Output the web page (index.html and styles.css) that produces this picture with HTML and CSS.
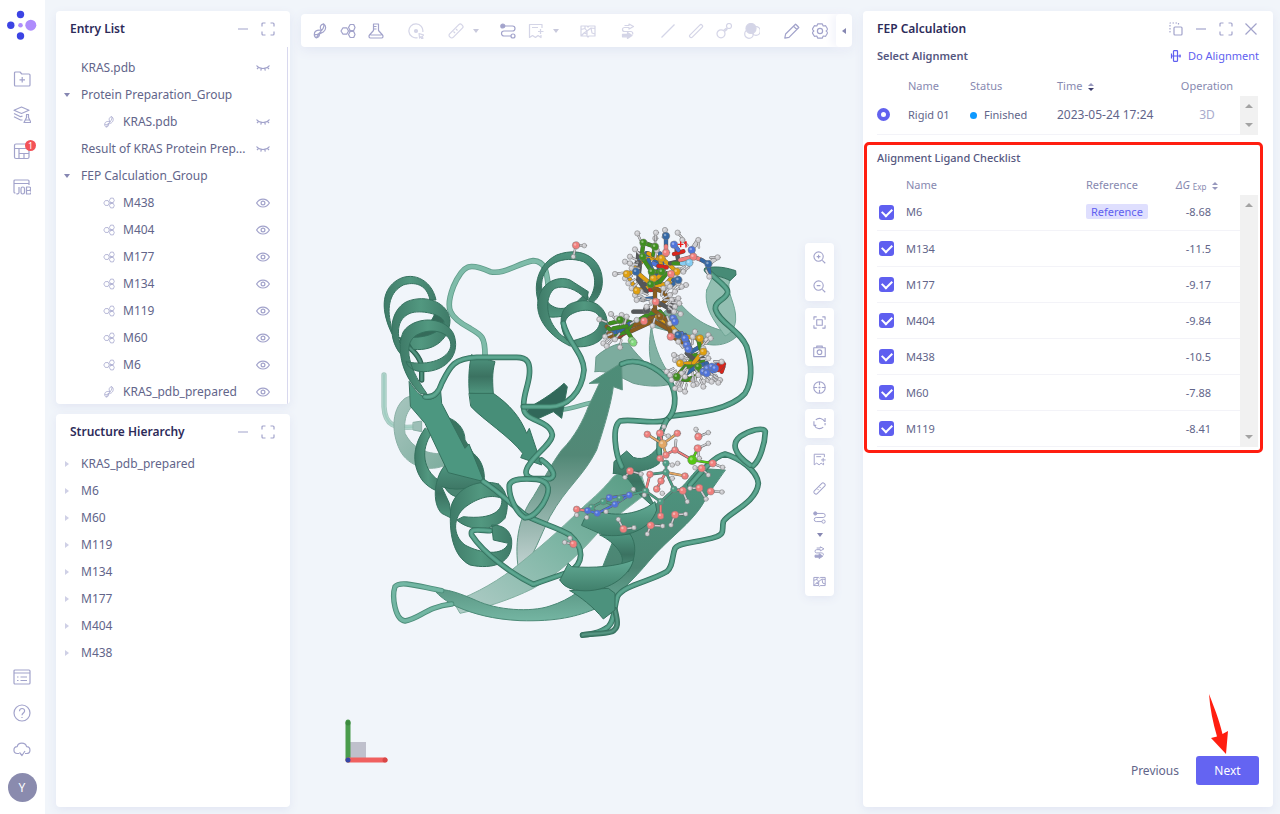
FILE: index.html
```html
<!DOCTYPE html>
<html lang="en">
<head>
<meta charset="utf-8">
<title>FEP Calculation</title>
<link rel="stylesheet" href="styles.css">
</head>
<body>
<svg class="defs" aria-hidden="true">
  <symbol id="i-folder" viewBox="0 0 18 18"><path d="M1.5 15V3a1 1 0 0 1 1-1H7l1.800 2H16a1 1 0 0 1 1 1v10a1 1 0 0 1-1 1H2.500a1 1 0 0 1-1-1zM9.200 7v5.500M6.500 9.800h5.500"/></symbol>
  <symbol id="i-layers" viewBox="0 0 18 18"><path d="M1 4.200 8.500 1 16 4.200 8.500 7.500zM1 7.500l6.500 3.200 2-.5M1 10.800l6.500 3.200h2M13 8.500h3M13.500 8.500v3L11 16.500h7l-2.500-5v-3M12.500 14h4.500"/></symbol>
  <symbol id="i-board" viewBox="0 0 18 18"><rect x="1.500" y="2" width="14.500" height="14.500" rx="1.500"/><path d="M1.500 6.500H16M6 6.500v10M6 11.500h10M11 11.500v5"/></symbol>
  <symbol id="i-job" viewBox="0 0 18 18"><path d="M2.500 15H2a1 1 0 0 1-1-1V3a1 1 0 0 1 1-1h13a1 1 0 0 1 1 1v4M1 5.500h15"/><path d="M6 9v5.500a1.500 1.500 0 0 1-2.500 1M13.500 9h2.500a1.600 1.600 0 0 1 0 3.500h-2.500zM13.500 12.500H16.500a1.700 1.700 0 0 1 0 3.500h-3z"/><rect x="8" y="9" width="3.500" height="7" rx="1.700"/></symbol>
  <symbol id="i-news" viewBox="0 0 18 18"><rect x="1" y="2" width="16" height="14" rx="1"/><path d="M1 5h16M4 9h1.500M7.500 9H14M4 12.500h1.500M7.500 12.500H14"/></symbol>
  <symbol id="i-help" viewBox="0 0 18 18"><circle cx="9" cy="9" r="8"/><path d="M6.500 7.200C6.500 3.500 11.700 3.800 11.600 7 11.500 9 9 9 9 11.300M9 13v1"/></symbol>
  <symbol id="i-cloud" viewBox="0 0 18 18"><path d="M6 13.500H4.500a3.400 3.400 0 0 1-.3-6.800C5 2 12.500 2 13.600 6.700c4.500.3 4.500 6.800-.2 6.800H12M6.500 12.500 9 15.500l3-4.500"/></symbol>
  <symbol id="i-full" viewBox="0 0 14 14"><path d="M1 4.500V2a1 1 0 0 1 1-1h2.500M9.500 1H12a1 1 0 0 1 1 1v2.500M13 9.500V12a1 1 0 0 1-1 1H9.500M4.500 13H2a1 1 0 0 1-1-1V9.500"/></symbol>
  <symbol id="i-min" viewBox="0 0 14 14"><path d="M2 7h10"/></symbol>
  <symbol id="i-x" viewBox="0 0 14 14"><path d="M1.500 1.500l11 11M12.500 1.500l-11 11"/></symbol>
  <symbol id="i-copy" viewBox="0 0 14 14"><rect x="5" y="5" width="8" height="8" rx="1"/><path stroke-dasharray="1.500 1.500" d="M9.500 2.500V1H1v9h2"/></symbol>
  <symbol id="i-closed" viewBox="0 0 14 14"><path d="M.5 4.500c3 4 10 4 13 0M2.500 6.300 1 8M5.300 7.500 4.800 9.700M8.800 7.500l.5 2.200M11.500 6.300 13 8"/></symbol>
  <symbol id="i-eye" viewBox="0 0 14 14"><path d="M.6 7c3-5.300 9.800-5.300 12.800 0-3 5.300-9.800 5.300-12.800 0z"/><circle cx="7" cy="7" r="1.900"/></symbol>
  <symbol id="i-helix" viewBox="0 0 16 16"><path d="M9.500 7.500C7 4.500 8.500 1.500 11.500.8c1 2.200.3 4.200-2 6.700zM11.500.8c3 2 2.800 6-.2 8.200C8 10.500 5.500 11 4.500 14.800M9.500 7.500C5 6.500 2 8.200 2.300 11.500c2.500.8 4.700-.5 7.200-4zM2.300 11.500c0 2 1 3 2.200 3.300 3-.5 3.500-3 2.500-5"/></symbol>
  <symbol id="i-mol" viewBox="0 0 16 16"><path d="M1 8l2-3.200h3.700L8.500 8l-1.800 3.200H3zM8.500 8h4M8.500 4.500l1.700-3h3.500l1.300 3-1.300 3h-3.500zM8.500 11.500l1.700-3h3.500l1.300 3-1.300 3h-3.500z"/></symbol>
  <symbol id="i-flask" viewBox="0 0 16 16"><path d="M5.500 1h5v6.500l4 4.500c1 1.200.5 3-1 3h-11c-1.500 0-2-1.800-1-3l4-4.500zM5.500 3.500h3M5.500 6h3M2.500 12h11"/></symbol>
  <symbol id="i-target" viewBox="0 0 16 16"><path d="M14.800 9A7 7 0 1 0 9.500 14.700"/><circle class="solid" cx="8" cy="8" r="1.500"/><path d="M11 10.500l5 1.700-2 1 1 2-1.200.5-1-2-1.200 1.300z"/></symbol>
  <symbol id="i-ruler" viewBox="0 0 16 16"><rect x="-.5" y="5.500" width="17" height="5" rx="2" transform="rotate(-45 8 8)"/><path d="M5.500 8.500l1.500 1.500M8 6l1.500 1.500"/></symbol>
  <symbol id="i-path" viewBox="0 0 16 16"><path d="M4 3h8.500a2.500 2.500 0 0 1 0 5H4a2.500 2.500 0 0 0 0 5h7"/><circle class="solid" cx="2.800" cy="3" r="2"/><circle cx="13" cy="13" r="2"/></symbol>
  <symbol id="i-mark" viewBox="0 0 16 16"><path d="M14 5V1.500H1.500v13l3-2 3 2 2.500-2 3 2V12M4 4.500h6M12.500 6v5M10 8.500h5.500"/></symbol>
  <symbol id="i-map" viewBox="0 0 16 16"><path d="M1 3h6l1 1 1-1h6v10H9l-1 1-1-1H1zM1 6.500l4-1 2 2.500-3 2-3 3M5 5.500V3M7 8l4-3 4 .5M11 5l1 5 3 1M7 8v5M4 10l3 1"/></symbol>
  <symbol id="i-route" viewBox="0 0 16 16"><path d="M4.500 2.500H9V1l4.500 2.500L9 6V4.500H4.500a2 2 0 0 0 0 4h6.500a2 2 0 0 1 1.500 3"/><path class="solid" d="M2.500 11.300h5V9.500l4.500 3-4.500 3v-1.700h-5z"/></symbol>
  <symbol id="i-line" viewBox="0 0 16 16"><path d="M1.500 14.500l13-13"/></symbol>
  <symbol id="i-stick" viewBox="0 0 16 16"><rect x="-.5" y="6.500" width="17" height="3.200" rx="1.600" transform="rotate(-45 8 8)"/></symbol>
  <symbol id="i-bond" viewBox="0 0 16 16"><circle cx="5" cy="10.800" r="4"/><circle cx="13" cy="3" r="2.500"/><path d="M7.500 7.500l2.500-2 1 1-2.500 2"/></symbol>
  <symbol id="i-balls" viewBox="0 0 16 16"><circle cx="5" cy="11" r="4.300"/><circle cx="12" cy="8" r="4.300"/><circle class="solid" cx="7" cy="5.500" r="5"/></symbol>
  <symbol id="i-pen" viewBox="0 0 16 16"><path d="M.8 15.200l.8-4.200L11.500 1.200l3.300 3.300L5 14.400zM9.500 3.200 12.800 6.500M12 1.500l2.500 2.500"/></symbol>
  <symbol id="i-gear" viewBox="0 0 16 16"><path d="M5.800.8h4.400l1 2.200 2.400-.3 2.100 3.600L14.200 8l1.500 1.700-2.100 3.600-2.400-.3-1 2.200H5.800L4.800 13l-2.400.3L.3 9.700 1.800 8 .3 6.300l2.100-3.600 2.400.3z"/><circle cx="8" cy="8" r="2.600"/></symbol>
  <symbol id="i-in" viewBox="0 0 14 14"><circle cx="6" cy="6" r="5"/><path d="M10 10l3.200 3.200M6 4v4M4 6h4"/></symbol>
  <symbol id="i-out" viewBox="0 0 14 14"><circle cx="6" cy="6" r="5"/><path d="M10 10l3.200 3.200M4 6h4"/></symbol>
  <symbol id="i-fit" viewBox="0 0 14 14"><path d="M1 4V1h3M10 1h3v3M13 10v3h-3M4 13H1v-3"/><rect x="4" y="4" width="6" height="6"/></symbol>
  <symbol id="i-cam" viewBox="0 0 14 14"><path d="M.8 3h12.400v9.500H.800zM4 3V1.200h6V3"/><circle cx="7" cy="7.700" r="2.500"/></symbol>
  <symbol id="i-cross" viewBox="0 0 14 14"><circle cx="7" cy="7" r="6.200"/><path d="M7 1v3.500M7 9.500V13M1 7h3.500M9.500 7H13"/><circle class="solid" cx="7" cy="7" r=".6"/></symbol>
  <symbol id="i-sync" viewBox="0 0 14 14"><path d="M3 3.200A5.800 5.800 0 0 1 12.500 5M13 1v4.500M1 4.500V9.500M11 10.800A5.800 5.800 0 0 1 1.500 9M13 9V6.500M1 9h2.500"/></symbol>
  <symbol id="i-align" viewBox="0 0 12 12"><rect x="3.500" y=".7" width="4" height="10.600" rx=".5"/><path d="M1.500 3.500v5M1.500 6H11M10 4.500v3"/></symbol>
</svg>

<nav class="rail">
  <svg class="logo" viewBox="0 0 30 30" role="img" aria-label="Home"><circle cx="13.500" cy="4.500" r="3.700" fill="#3c44e4"/><circle cx="3.800" cy="15.200" r="3.700" fill="#3c44e4"/><circle cx="13.500" cy="26" r="3.700" fill="#3c44e4"/><circle cx="13.500" cy="15.200" r="2.300" fill="#ae8cfc"/><circle cx="23.800" cy="15.200" r="5.500" fill="#ae8cfc"/></svg>
  <button class="rail-btn" aria-label="New project"><svg><use href="#i-folder"/></svg></button>
  <button class="rail-btn" aria-label="Library"><svg><use href="#i-layers"/></svg></button>
  <button class="rail-btn" aria-label="Results"><svg><use href="#i-board"/></svg><span class="badge">1</span></button>
  <button class="rail-btn" aria-label="Jobs"><svg><use href="#i-job"/></svg></button>
  <span class="grow"></span>
  <button class="rail-btn" aria-label="News"><svg><use href="#i-news"/></svg></button>
  <button class="rail-btn" aria-label="Help"><svg><use href="#i-help"/></svg></button>
  <button class="rail-btn" aria-label="Cloud"><svg><use href="#i-cloud"/></svg></button>
  <button class="avatar">Y</button>
</nav>

<main class="workspace">
  <div class="side">
    <section class="panel entries">
      <header class="panel-head"><h2>Entry List</h2><button class="ico" aria-label="Minimize"><svg><use href="#i-min"/></svg></button><button class="ico" aria-label="Full screen"><svg><use href="#i-full"/></svg></button></header>
      <ul class="tree scrolled">
        <li class="row"><span class="fold"></span><span class="label">KRAS.pdb</span><button class="ico" aria-label="Show"><svg><use href="#i-closed"/></svg></button></li>
        <li class="row"><span class="fold open"></span><span class="label">Protein Preparation_Group</span></li>
        <li class="row child"><svg class="kind"><use href="#i-helix"/></svg><span class="label">KRAS.pdb</span><button class="ico" aria-label="Show"><svg><use href="#i-closed"/></svg></button></li>
        <li class="row"><span class="fold"></span><span class="label">Result of KRAS Protein Prep...</span><button class="ico" aria-label="Show"><svg><use href="#i-closed"/></svg></button></li>
        <li class="row"><span class="fold open"></span><span class="label">FEP Calculation_Group</span></li>
        <li class="row child"><svg class="kind"><use href="#i-mol"/></svg><span class="label">M438</span><button class="ico" aria-label="Hide"><svg><use href="#i-eye"/></svg></button></li>
        <li class="row child"><svg class="kind"><use href="#i-mol"/></svg><span class="label">M404</span><button class="ico" aria-label="Hide"><svg><use href="#i-eye"/></svg></button></li>
        <li class="row child"><svg class="kind"><use href="#i-mol"/></svg><span class="label">M177</span><button class="ico" aria-label="Hide"><svg><use href="#i-eye"/></svg></button></li>
        <li class="row child"><svg class="kind"><use href="#i-mol"/></svg><span class="label">M134</span><button class="ico" aria-label="Hide"><svg><use href="#i-eye"/></svg></button></li>
        <li class="row child"><svg class="kind"><use href="#i-mol"/></svg><span class="label">M119</span><button class="ico" aria-label="Hide"><svg><use href="#i-eye"/></svg></button></li>
        <li class="row child"><svg class="kind"><use href="#i-mol"/></svg><span class="label">M60</span><button class="ico" aria-label="Hide"><svg><use href="#i-eye"/></svg></button></li>
        <li class="row child"><svg class="kind"><use href="#i-mol"/></svg><span class="label">M6</span><button class="ico" aria-label="Hide"><svg><use href="#i-eye"/></svg></button></li>
        <li class="row child"><svg class="kind"><use href="#i-helix"/></svg><span class="label">KRAS_pdb_prepared</span><button class="ico" aria-label="Hide"><svg><use href="#i-eye"/></svg></button></li>
      </ul>
    </section>
    <section class="panel structure">
      <header class="panel-head"><h2>Structure Hierarchy</h2><button class="ico" aria-label="Minimize"><svg><use href="#i-min"/></svg></button><button class="ico" aria-label="Full screen"><svg><use href="#i-full"/></svg></button></header>
      <ul class="tree">
        <li class="row"><span class="fold shut"></span><span class="label">KRAS_pdb_prepared</span></li>
        <li class="row"><span class="fold shut"></span><span class="label">M6</span></li>
        <li class="row"><span class="fold shut"></span><span class="label">M60</span></li>
        <li class="row"><span class="fold shut"></span><span class="label">M119</span></li>
        <li class="row"><span class="fold shut"></span><span class="label">M134</span></li>
        <li class="row"><span class="fold shut"></span><span class="label">M177</span></li>
        <li class="row"><span class="fold shut"></span><span class="label">M404</span></li>
        <li class="row"><span class="fold shut"></span><span class="label">M438</span></li>
      </ul>
    </section>
  </div>

  <div class="viewer">
    <div class="toolbar" role="toolbar" aria-label="Viewer tools">
      <div class="tools"><button class="tool" aria-label="Protein"><svg><use href="#i-helix"/></svg></button><button class="tool" aria-label="Ligand"><svg><use href="#i-mol"/></svg></button><button class="tool" aria-label="Prepare"><svg><use href="#i-flask"/></svg></button></div>
      <div class="tools"><button class="tool dim" aria-label="Select"><svg><use href="#i-target"/></svg></button></div>
      <div class="tools"><button class="tool dim" aria-label="Measure"><svg><use href="#i-ruler"/></svg></button><button class="drop dim" aria-label="Measure options"></button></div>
      <div class="tools"><button class="tool" aria-label="Interactions"><svg><use href="#i-path"/></svg></button><button class="tool dim" aria-label="Label"><svg><use href="#i-mark"/></svg></button><button class="drop dim" aria-label="Label options"></button></div>
      <div class="tools"><button class="tool dim" aria-label="Surface"><svg><use href="#i-map"/></svg></button></div>
      <div class="tools"><button class="tool dim" aria-label="Cartoon"><svg><use href="#i-route"/></svg></button></div>
      <div class="tools"><button class="tool dim" aria-label="Line"><svg><use href="#i-line"/></svg></button><button class="tool dim" aria-label="Stick"><svg><use href="#i-stick"/></svg></button><button class="tool dim" aria-label="Ball and stick"><svg><use href="#i-bond"/></svg></button><button class="tool dim" aria-label="Spheres"><svg><use href="#i-balls"/></svg></button></div>
      <div class="tools"><button class="tool" aria-label="Edit"><svg><use href="#i-pen"/></svg></button><button class="tool" aria-label="Settings"><svg><use href="#i-gear"/></svg></button></div>
      <button class="more" aria-label="Collapse"></button>
    </div>
    <div class="stage">
      <svg class="scene" viewBox="301 47 551 760" role="img" aria-label="KRAS protein with aligned ligands">
        <defs>
          <linearGradient id="g-light" x1="0" y1="0" x2="0" y2="1"><stop offset="0" stop-color="#62ab95"/><stop offset="1" stop-color="#41806c"/></linearGradient>
          <linearGradient id="g-deep" x1="0" y1="0" x2="0" y2="1"><stop offset="0" stop-color="#4f9680"/><stop offset=".55" stop-color="#3b7261"/><stop offset="1" stop-color="#4f967f"/></linearGradient>
          <linearGradient id="g-turn" x1="0" y1="0" x2="1" y2="0"><stop offset="0" stop-color="#3f7b68"/><stop offset=".5" stop-color="#529880"/><stop offset="1" stop-color="#3f7b68"/></linearGradient>
          <linearGradient id="g-fall" x1="0" y1="0" x2="0" y2="1"><stop offset="0" stop-color="#4d8d78"/><stop offset=".45" stop-color="#528876"/><stop offset="1" stop-color="#c3d3d2"/></linearGradient>
          <linearGradient id="g-slope" x1="1" y1="0" x2="0" y2="1"><stop offset="0" stop-color="#52987f"/><stop offset=".5" stop-color="#7db5a4"/><stop offset="1" stop-color="#b2cdc8"/></linearGradient>
          <linearGradient id="g-floor" x1="0" y1="0" x2="0" y2="1"><stop offset="0" stop-color="#4d9680"/><stop offset=".65" stop-color="#4c8573"/><stop offset="1" stop-color="#74b5a2"/></linearGradient>
          <linearGradient id="g-mist" x1="0" y1="0" x2="1" y2="1"><stop offset="0" stop-color="#a8c6bf"/><stop offset="1" stop-color="#7cac9d"/></linearGradient>
        </defs>
        <g id="molecule" transform="translate(370 220) scale(.333333)"></g>
        <g class="axes">
          <rect x="348" y="742" width="18" height="18" fill="#bfc0cc"/>
          <path d="M348 722v38" stroke="#4a9c4c" stroke-width="5"/><circle cx="348" cy="723" r="2.500" fill="#3c8b3e"/>
          <path d="M348 760h37" stroke="#f0605f" stroke-width="5"/><circle cx="385" cy="760" r="2.500" fill="#d84646"/>
          <circle cx="348" cy="760" r="2.500" fill="#3545a8"/>
        </g>
      </svg>
      <div class="dock">
        <div class="dock-group"><button class="dock-btn" aria-label="Zoom in"><svg><use href="#i-in"/></svg></button><button class="dock-btn" aria-label="Zoom out"><svg><use href="#i-out"/></svg></button></div>
        <div class="dock-group"><button class="dock-btn" aria-label="Fit"><svg><use href="#i-fit"/></svg></button><button class="dock-btn" aria-label="Snapshot"><svg><use href="#i-cam"/></svg></button></div>
        <div class="dock-group"><button class="dock-btn" aria-label="Center"><svg><use href="#i-cross"/></svg></button></div>
        <div class="dock-group"><button class="dock-btn" aria-label="Reset"><svg><use href="#i-sync"/></svg></button></div>
        <div class="dock-group"><button class="dock-btn" aria-label="Label"><svg><use href="#i-mark"/></svg></button><button class="dock-btn" aria-label="Measure"><svg><use href="#i-ruler"/></svg></button><button class="dock-btn" aria-label="Interactions"><svg><use href="#i-path"/></svg></button><button class="dock-drop" aria-label="Interaction options"></button><button class="dock-btn" aria-label="Cartoon"><svg><use href="#i-route"/></svg></button><button class="dock-btn" aria-label="Surface"><svg><use href="#i-map"/></svg></button></div>
      </div>
    </div>
  </div>

  <section class="panel fep">
    <header class="panel-head"><h2>FEP Calculation</h2><button class="ico" aria-label="Pop out"><svg><use href="#i-copy"/></svg></button><button class="ico" aria-label="Minimize"><svg><use href="#i-min"/></svg></button><button class="ico" aria-label="Full screen"><svg><use href="#i-full"/></svg></button><button class="ico" aria-label="Close"><svg><use href="#i-x"/></svg></button></header>
    <div class="fep-sub"><h3>Select Alignment</h3><a class="do" href="#align"><svg><use href="#i-align"/></svg>Do Alignment</a></div>
    <div class="grid">
      <table class="runs">
        <thead><tr><th class="c-pick"></th><th class="c-run">Name</th><th class="c-status">Status</th><th>Time<i class="sort desc"></i></th><th class="c-op">Operation</th></tr></thead>
        <tbody><tr><td><input type="radio" class="pick" name="run" aria-label="Rigid 01" checked></td><td>Rigid 01</td><td><span class="done">Finished</span></td><td class="time">2023-05-24 17:24</td><td class="c-op"><button class="view3d">3D</button></td></tr></tbody>
      </table>
      <div class="track" aria-hidden="true"></div>
    </div>
    <section class="checklist">
      <h3>Alignment Ligand Checklist</h3>
      <div class="grid">
        <table class="ligands">
          <thead><tr><th class="c-check"></th><th>Name</th><th class="c-ref">Reference</th><th class="c-dg"><em>ΔG</em> <small>Exp</small><i class="sort"></i></th></tr></thead>
          <tbody>
            <tr><td><input type="checkbox" aria-label="M6" checked></td><td>M6</td><td><span class="tag">Reference</span></td><td class="num">-8.68</td></tr>
            <tr><td><input type="checkbox" aria-label="M134" checked></td><td>M134</td><td></td><td class="num">-11.5</td></tr>
            <tr><td><input type="checkbox" aria-label="M177" checked></td><td>M177</td><td></td><td class="num">-9.17</td></tr>
            <tr><td><input type="checkbox" aria-label="M404" checked></td><td>M404</td><td></td><td class="num">-9.84</td></tr>
            <tr><td><input type="checkbox" aria-label="M438" checked></td><td>M438</td><td></td><td class="num">-10.5</td></tr>
            <tr><td><input type="checkbox" aria-label="M60" checked></td><td>M60</td><td></td><td class="num">-7.88</td></tr>
            <tr><td><input type="checkbox" aria-label="M119" checked></td><td>M119</td><td></td><td class="num">-8.41</td></tr>
          </tbody>
        </table>
        <div class="track tall" aria-hidden="true"></div>
      </div>
    </section>
    <span class="grow"></span>
    <footer class="actions">
      <button class="prev">Previous</button>
      <button class="next">Next</button>
      <svg class="pointer" viewBox="0 0 24 64" aria-hidden="true"><path d="M3 1C8 14 13 26 16.500 41L22 38 20 61 5 45l6-1.500C7 30 4 16 3 1z" fill="#ff1e10"/></svg>
    </footer>
  </section>
</main>
<script src="scene.js"></script>
</body>
</html>
```
FILE: styles.css
```css
* { box-sizing: border-box; }
body { margin: 0; min-height: 100vh; display: flex; background: #f1f5fa; color: #62658a; font: 12px/18px "Noto Sans", "Open Sans", sans-serif; }
button { border: 0; padding: 0; background: none; color: inherit; font: inherit; display: inline-flex; align-items: center; justify-content: center; cursor: pointer; }
h2, h3 { margin: 0; }
ul { margin: 0; padding: 0; list-style: none; }
svg { fill: none; stroke: #a2a3cb; stroke-linejoin: round; stroke-width: 1.2; flex: none; }
.solid { fill: #a2a3cb; }
.defs { position: absolute; width: 0; height: 0; }
.grow { flex: 1; }

.rail { width: 45px; background: #fff; display: flex; flex-direction: column; align-items: center; padding: 10px 1px 12px 0; flex: none; }
.logo { width: 30px; height: 30px; stroke: none; margin-bottom: 21px; }
.rail-btn { width: 36px; height: 36px; position: relative; }
.rail-btn svg { width: 18px; height: 18px; }
.badge { position: absolute; top: 7px; right: 4px; width: 11px; height: 11px; border-radius: 50%; background: #f35258; color: #fff; font-size: 9px; line-height: 11px; }
.avatar { width: 29px; height: 29px; border-radius: 50%; background: #8a8bae; color: #fff; margin-top: 6px; }

.workspace { flex: 1; min-width: 0; display: flex; gap: 11px; padding: 11px 7px 7px 11px; }
.panel { background: #fff; border-radius: 4px; box-shadow: 0 3px 10px #e2e6f3; }
.panel-head { height: 36px; display: flex; align-items: center; gap: 11px; padding: 0 15px 0 14px; }
.panel-head h2 { flex: 1; font-size: 12px; font-weight: 600; color: #2d2b5a; }
.ico { width: 14px; height: 14px; }
.ico svg { width: 14px; height: 14px; }

.side { width: 234px; flex: none; display: flex; flex-direction: column; gap: 10px; }
.side .panel { flex: 1 0 0; min-height: 0; overflow: hidden; }
.tree.scrolled { padding-top: 7px; border-right: 1px solid #d8d8ee; margin-right: 2px; }
.row { height: 27px; display: flex; align-items: center; padding: 0 20px 0 4px; }
.scrolled .row { padding-right: 17px; }
.label { flex: 1; white-space: nowrap; }
.fold { width: 14px; margin-right: 7px; display: flex; justify-content: center; }
.open::before, .drop::before, .dock-drop::before { content: ""; border: 3px solid transparent; border-top: 4px solid #8687b2; border-bottom: 0; }
.shut::before { content: ""; border: 3px solid transparent; border-left: 4px solid #cfd0e6; border-right: 0; }
.child { padding-left: 47px; }
.kind { width: 12px; height: 12px; margin-right: 8px; stroke-width: 1; }

.viewer { flex: 1; min-width: 0; display: flex; flex-direction: column; padding-top: 3px; }
.toolbar { height: 33px; background: #fff; border-radius: 4px; display: flex; align-items: stretch; padding-left: 5px; box-shadow: 0 3px 12px #e2e6f3; }
.tools { display: flex; }
.tools + .tools { margin-left: 12px; }
.tool { width: 28px; }
.tool svg { width: 16px; height: 16px; }
.dim { opacity: .45; }
.drop { width: 12px; }
.more { width: 16px; margin-left: auto; border-radius: 4px; box-shadow: -4px 0 8px #f3f4fb; }
.more::before { content: ""; border: 3px solid transparent; border-right: 4px solid #8687b2; border-left: 0; }
.stage { flex: 1; position: relative; }
.scene { position: absolute; width: 100%; height: 100%; stroke: none; stroke-linecap: round; }
.dock { position: absolute; top: 196px; right: 18px; width: 29px; display: flex; flex-direction: column; gap: 7px; }
.dock-group { background: #fff; border-radius: 4px; display: flex; flex-direction: column; box-shadow: 0 2px 10px #e2e6f3; }
.dock-btn { height: 29px; }
.dock-btn svg { width: 13px; height: 13px; }
.dock-drop { height: 6px; }

.fep { width: 410px; flex: none; display: flex; flex-direction: column; padding: 0 14px 22px; }
.fep .panel-head { padding: 0 1px 0 0; }
h3 { font-size: 11px; font-weight: 600; color: #55577f; }
.fep-sub { display: flex; justify-content: space-between; align-items: center; height: 18px; }
.do { color: #5f5ff0; text-decoration: none; font-size: 11px; display: flex; align-items: center; gap: 6px; }
.do svg { width: 12px; height: 12px; stroke: #5f5ff0; }
.grid { display: flex; align-items: flex-end; }
table { flex: 1; border-collapse: collapse; table-layout: fixed; font-size: 11px; line-height: 16px; }
th, td { padding: 0; text-align: left; font-weight: 400; }
th { color: #8789b0; }
td { border-bottom: 1px solid #f3f3f8; }
input { appearance: none; margin: 0; display: block; }
.runs th { height: 31px; padding-top: 11px; }
.runs td { height: 38px; }
.c-pick { width: 31px; }
.c-run { width: 62px; }
.c-status { width: 87px; }
.c-op { width: 66px; text-align: center; }
.pick { width: 13px; height: 13px; border: 4px solid #6262ee; border-radius: 50%; background: #fff; }
.done::before { content: ""; display: inline-block; width: 7px; height: 7px; border-radius: 50%; background: #0d99ff; margin-right: 7px; }
.time { font-size: 12px; }
.view3d { font-size: 12px; color: #a9abcd; }
.sort { display: inline-flex; flex-direction: column; gap: 2px; margin-left: 6px; vertical-align: middle; }
.sort::before, .sort::after { content: ""; border: 3px solid transparent; }
.sort::before { border-top: 0; border-bottom: 3px solid #9798bd; }
.sort::after { border-bottom: 0; border-top: 3px solid #9798bd; }
.sort.desc::after { border-top-color: #3e3e6e; }
.track { width: 18px; height: 39px; background: #f1f1f1; display: flex; flex-direction: column; justify-content: space-between; align-items: center; padding: 8px 0; margin-right: 1px; }
.track::before, .track::after { content: ""; border: 4px solid transparent; }
.track::before { border-top: 0; border-bottom: 4px solid #a3a3a3; }
.track::after { border-bottom: 0; border-top: 4px solid #a3a3a3; }
.track.tall { height: 252px; }

.checklist { margin: 7px -4px 0 -13px; border: 3px solid #ff1e10; border-radius: 5px; padding: 0 1px 3px 10px; }
.checklist h3 { line-height: 26px; font-weight: 500; }
.ligands th { height: 24px; padding-top: 4px; }
.ligands td { height: 36px; }
.c-check { width: 29px; }
.c-ref { width: 90px; }
.c-dg { width: 64px; }
.c-dg small { font-size: 8px; line-height: 8px; vertical-align: -1px; }
.ligands .num { text-align: right; padding-right: 29px; }
.tag { display: inline-block; background: #dfdffe; color: #5f5ff0; border-radius: 2px; padding: 0 5px; line-height: 15px; }
.ligands input { width: 15px; height: 15px; margin-left: 2px; border-radius: 3px; background: #5f5ff0; display: flex; align-items: center; justify-content: center; }
.ligands input::before { content: ""; width: 8px; height: 5px; border: 2px solid #fff; border-top: 0; border-right: 0; transform: rotate(-45deg); margin-bottom: 2px; }

.actions { display: flex; justify-content: flex-end; gap: 17px; position: relative; }
.next { width: 63px; height: 29px; border-radius: 3px; background: #6464f2; color: #fff; }
.pointer { position: absolute; width: 24px; height: 64px; right: 29px; bottom: 28px; stroke: none; }
```
FILE: scene.js
```js
const NS = 'http://www.w3.org/2000/svg';
const root = document.getElementById('molecule');

function add(tag, attrs) {
  const el = document.createElementNS(NS, tag);
  for (const key in attrs) el.setAttribute(key, attrs[key]);
  root.appendChild(el);
}

// tube: backbone coil; ribbon: helix turn or sheet
function tube(d, color = '#4f9a83', edge = '#35705e', width = 12) {
  add('path', { d, fill: 'none', stroke: edge, 'stroke-width': width + 5 });
  add('path', { d, fill: 'none', stroke: color, 'stroke-width': width });
  add('path', { d, fill: 'none', stroke: '#7cc0ab', 'stroke-width': width / 2, opacity: 0.35 });
}
function ribbon(d, fill = 'url(#g-light)', edge = '#34705d') {
  add('path', { d, fill, stroke: edge, 'stroke-width': 3 });
}

// far layer
tube('M42 465V560C45 615 70 628 145 620', '#b4d5cd', '#a3c6bd', 11);
ribbon('M235 600C225 540 160 505 105 535C60 570 65 650 95 700C125 745 190 760 240 728L225 700C180 705 130 690 105 640C100 600 110 560 150 545C185 540 200 570 205 600Z', 'url(#g-mist)', '#8bb0a6');
ribbon('M130 607L155 603V635L130 630Z', '#9dbfb7', '#8bb0a6');
tube('M345 405C345 350 335 345 300 325C235 290 225 265 250 200C280 130 300 128 360 155C405 165 440 130 490 122C525 125 530 150 535 200', '#80bba9', '#5f9c89', 12);
tube('M580 568C610 565 630 555 665 548', '#80bba9', '#5f9c89', 9);
ribbon('M930 250C980 310 1040 335 1110 340C1070 385 1010 385 960 350L845 320C850 370 870 420 890 450L850 450C830 400 840 350 845 310L900 260Z', '#82b2a4', '#6c9f90');
ribbon('M1010 210C1020 190 1025 175 1030 165L1080 180C1065 215 1100 250 1097 300C1095 330 1075 345 1065 348C1040 310 1000 270 1010 210Z', '#93bfb2', '#6fa696');
ribbon('M675 455L678 410C700 390 740 365 775 370C810 420 870 470 910 490C880 500 840 502 790 490C750 470 710 450 675 455Z', '#7cac9e', '#69998b');
ribbon('M1005 145C1040 135 1075 145 1097 152L1098 165L1080 182C1060 170 1030 165 1015 165Z', '#478b76');
ribbon('M658 490L755 428L757 510L730 500C725 540 710 600 680 690C640 770 590 800 540 890C510 950 490 1010 460 1045L445 1045C435 980 440 900 490 830C520 780 545 730 575 690C615 650 640 600 655 560L688 490Z', 'url(#g-fall)', '#5f9483');
ribbon('M800 720L730 770C690 820 660 840 630 870C570 930 500 990 450 1030C390 1080 320 1120 250 1145L270 1180C340 1165 420 1140 490 1105C570 1060 640 990 700 920L830 820Z', 'url(#g-slope)', '#7fae9f');
ribbon('M1065 750L985 745C960 770 945 795 930 805C880 830 850 860 800 900L730 960L690 1060C650 1100 600 1140 540 1158C480 1178 380 1170 320 1142C270 1120 230 1105 190 1108C210 1130 230 1145 260 1160C310 1182 370 1198 450 1202C560 1205 620 1190 680 1165C740 1130 790 1080 840 1020C900 950 980 900 1010 830Z', 'url(#g-floor)', '#4b8a76');
ribbon('M730 760L732 725L770 693L790 712C825 725 850 700 865 680L868 730C850 745 830 750 800 755L860 870L800 815C780 780 765 760 730 760Z', 'url(#g-deep)');

// upper left helix
ribbon('M85 352C120 362 170 340 195 280L225 290C220 340 170 370 120 385Z', '#356b5a');
tube('M95 365C130 390 150 410 155 440V480', '#3e7c69', '#28594a', 11);
ribbon('M65 340C32 270 35 215 75 185C120 150 185 175 198 240L180 240C170 190 130 185 100 195C60 215 50 260 62 310Z', 'url(#g-turn)');
ribbon('M90 400C50 350 60 270 110 245C170 220 235 250 240 300C240 350 200 395 130 388L105 350C170 360 222 330 222 305C215 282 150 268 120 280C85 295 76 330 95 390Z', 'url(#g-turn)');
ribbon('M150 520C90 460 80 380 100 335C130 290 220 285 250 340C275 400 230 455 160 455C130 455 112 440 108 425C180 440 235 415 242 380C248 340 190 318 140 345C104 365 105 430 170 520Z', 'url(#g-turn)');

// lower left helix
ribbon('M165 625C125 680 125 740 160 785C180 805 200 815 215 815L205 780C160 750 150 690 185 640Z', 'url(#g-turn)');
ribbon('M225 590C265 600 285 630 285 660L310 700C335 720 345 750 343 785L280 740L230 640Z', '#3a7461');
ribbon('M230 730C190 770 185 850 215 880L245 895L238 850L215 800C270 820 320 800 345 782L260 750Z', 'url(#g-deep)');
ribbon('M225 803C270 815 310 800 335 790L300 825C270 840 240 830 225 803Z', '#4a8572');
ribbon('M385 792C330 775 260 800 243 860C235 940 250 1010 300 1035C370 1050 430 1030 425 960C420 930 400 915 365 915L370 960L415 970C400 1010 330 1000 285 975C245 945 250 890 285 862C315 838 360 820 395 835C400 870 370 900 280 890L260 900C300 935 370 935 405 895C420 850 410 810 385 792Z', 'url(#g-turn)');
ribbon('M118 485C135 510 150 530 175 537C195 540 207 520 210 490L215 550L285 685L297 672L342 785L235 758L165 610L122 560Z', '#4c9780');

// centre sheet
ribbon('M305 405L375 425C365 460 368 490 370 522L298 520C295 480 296 440 305 405Z', 'url(#g-deep)');
ribbon('M298 520L370 520C420 555 450 590 470 640L478 625L515 735L452 713L458 700C420 650 340 600 303 560Z', '#478e78');
ribbon('M480 560C520 540 560 510 582 490L592 500L575 595L550 575L500 598L470 575Z', '#31685a');
tube('M340 785C380 810 410 840 465 885C510 910 560 920 600 945C645 985 640 1030 600 1055L490 1093C430 1065 340 1000 305 945C300 925 320 930 360 932');
tube('M515 720C550 745 560 770 540 776H490C460 770 465 750 480 730C500 700 545 670 547 645C540 600 470 605 462 570C455 535 475 500 478 465C482 425 470 412 440 412H320C250 415 240 440 215 490C205 520 190 535 165 530');
tube('M465 893C440 880 415 830 418 795C425 775 460 775 500 778C545 785 540 815 520 850C500 880 485 893 465 893');

// upper centre helix
ribbon('M530 290C480 230 490 140 560 105C640 75 700 120 697 190C695 220 680 240 665 250L655 240C680 210 685 150 640 125C580 105 520 130 515 190C512 230 540 270 580 265C600 262 620 250 650 215L655 235C620 290 560 295 530 290Z', 'url(#g-deep)');
ribbon('M600 378C540 350 500 300 503 250C508 190 560 165 600 180L655 215L650 240C620 205 580 195 555 205C525 225 525 290 560 330C570 345 590 360 615 365Z', 'url(#g-turn)');
ribbon('M590 360C565 320 565 260 610 248C660 230 710 255 712 310C712 360 670 385 610 380L600 365C650 350 690 340 690 300C690 270 640 260 600 285C580 300 580 320 600 355Z', 'url(#g-turn)');
tube('M580 310C595 370 640 400 642 450C635 520 590 560 540 560H460');

// right hand coils
tube('M1010 150C1040 180 1080 205 1072 220C1065 240 1030 245 1037 270C1050 310 1110 330 1130 380C1145 430 1150 480 1125 520C1080 570 980 580 905 588');
tube('M755 432C800 410 860 440 900 485C925 530 915 580 890 600C850 615 790 595 750 603C725 620 735 700 755 740');
tube('M890 600C870 640 865 660 868 700');
tube('M960 795C990 760 1030 710 1065 702C1110 715 1160 750 1165 790C1160 850 1070 880 1060 905C1055 930 1065 940 1040 950C980 970 930 965 915 985C905 1010 910 1040 890 1055C840 1085 760 1095 742 1130C730 1170 735 1200 715 1220C690 1240 650 1245 638 1245');
tube('M1140 735C1090 700 1085 670 1110 650C1140 630 1180 620 1186 635C1185 670 1170 720 1150 737');
tube('M735 1170C745 1210 745 1225 725 1235C700 1243 660 1240 638 1245', '#43806d');
tube('M215 1112C150 1100 90 1080 75 1100C65 1130 75 1200 105 1203C150 1195 170 1160 245 1152', '#6fb3a0', '#4a8b77', 11);

// lower right helix
ribbon('M690 945L780 942C800 970 800 1010 775 1055L755 1030C765 1010 740 970 690 945Z', 'url(#g-deep)');
ribbon('M635 915C645 890 655 875 670 868C720 890 800 890 855 845L860 870C840 930 770 955 700 945Z');
ribbon('M600 1112L715 1105L735 1120V1170L700 1197C670 1160 630 1130 600 1112Z', '#4c927d');
ribbon('M570 1080L595 1030L605 1040C670 1045 740 1040 790 1020C785 1050 740 1105 660 1112C620 1115 580 1105 570 1080Z');

// ball and stick atoms
const HUE = { h: '#cdcdd1', o: '#f07e7c', n: '#4f74dc', c: '#4d9d84', p: '#e2a765', m: '#55c814', g: '#3f8f1f', y: '#e0a010', b: '#3468a6', k: '#55575a', r: '#d8251c', w: '#8a5d1e', l: '#85cdf3', e: '#82d97d' };
function stick(x1, y1, x2, y2, c, w = 6) {
  add('path', { d: `M${x1} ${y1}L${x2} ${y2}`, stroke: '#555', 'stroke-width': w + 2 });
  add('path', { d: `M${x1} ${y1}L${x2} ${y2}`, stroke: HUE[c], 'stroke-width': w });
}
function ball(x, y, c, r) {
  add('circle', { cx: x, cy: y, r, fill: HUE[c], stroke: '#777', 'stroke-width': 1.5 });
  add('circle', { cx: x - r / 4, cy: y - r / 4, r: r / 3, fill: '#fff', opacity: 0.4 });
}

// each water: oxygen x y, then hydrogens x y
const waters = [
  [780, 753, 765, 772, 813, 762], [870, 640, 882, 620, 895, 648], [985, 650, 978, 628, 1015, 638],
  [983, 685, 1015, 670, 988, 715], [1028, 730, 1058, 742], [995, 745, 1015, 765, 975, 743],
  [988, 804, 960, 805, 1008, 837], [1022, 814, 1056, 816], [938, 812, 952, 845], [915, 884, 947, 882, 903, 915],
  [842, 916, 878, 918, 832, 942], [760, 927, 745, 898, 792, 923], [610, 972, 584, 967, 600, 954], [618, 76, 643, 77, 610, 110]
];
const cofactor = [
  [878, 672, 832, 643, 'p'], [878, 672, 922, 640, 'p'], [878, 672, 888, 703, 'p'], [878, 672, 870, 640, 'o'],
  [888, 703, 915, 690, 'o'], [915, 690, 918, 660, 'h'], [915, 690, 967, 720, 'o'], [870, 715, 888, 730, 'o'],
  [888, 730, 888, 757, 'c'], [888, 757, 840, 763, 'c'], [840, 763, 827, 813, 'o'], [827, 813, 872, 845, 'c'],
  [872, 845, 912, 808, 'c'], [912, 808, 888, 757, 'c'], [888, 757, 945, 768, 'p'], [888, 757, 873, 783, 'o'],
  [873, 783, 860, 807, 'o'], [872, 845, 872, 888, 'o'], [912, 808, 938, 812, 'o'], [827, 813, 778, 825, 'c'],
  [778, 825, 718, 833, 'n'], [718, 833, 665, 862, 'c'], [778, 825, 735, 853, 'n'], [735, 853, 682, 880, 'n'],
  [665, 862, 653, 872, 'c'], [653, 872, 620, 868, 'o'], [653, 872, 682, 880, 'n'], [700, 845, 735, 853, 'c'],
  [967, 720, 983, 685, 'm'], [967, 720, 1028, 730, 'm']
];
cofactor.forEach(s => stick(...s));
waters.forEach(w => {
  for (let i = 2; i < w.length; i += 2) stick(w[0], w[1], w[i], w[i + 1], 'h', 5);
  ball(w[0], w[1], 'o', 11);
  for (let i = 2; i < w.length; i += 2) ball(w[i], w[i + 1], 'h', 7);
});
const cofactorAtoms = {
  o: [832, 643, 922, 640, 888, 705, 915, 690, 870, 715, 840, 763, 945, 768, 873, 783, 860, 807, 872, 888, 620, 868],
  c: [888, 730, 888, 757, 827, 813, 872, 845, 912, 808, 700, 845, 750, 835, 665, 862],
  n: [653, 872, 682, 880, 735, 853, 718, 833, 778, 825],
  h: [907, 735, 923, 730, 620, 885, 650, 892, 708, 875, 790, 808, 823, 825, 877, 820, 907, 775]
};
for (const c in cofactorAtoms) {
  const a = cofactorAtoms[c];
  for (let i = 0; i < a.length; i += 2) ball(a[i], a[i + 1], c, c === 'h' ? 7 : 10);
}
ball(878, 672, 'p', 13);
ball(967, 720, 'm', 14);

// overlaid ligands: hue, then a polyline of x y pairs
const chains = [
  ['k', 805, 100, 800, 150, 815, 190, 850, 200], ['b', 800, 130, 830, 100, 870, 130, 860, 180, 830, 210], ['y', 770, 162, 800, 212, 840, 200, 900, 190],
  ['k', 810, 130, 805, 180, 830, 215], ['y', 780, 160, 820, 120, 870, 110, 920, 155, 890, 190], ['b', 835, 120, 850, 160, 880, 150, 870, 100],
  ['y', 835, 100, 870, 120, 880, 160, 840, 190, 810, 165], ['b', 888, 48, 888, 78], ['o', 888, 78, 888, 105], ['b', 910, 180, 925, 175, 905, 200],
  ['k', 920, 90, 925, 125, 900, 130], ['r', 912, 102, 940, 94], ['g', 910, 130, 935, 130], ['l', 935, 130, 958, 128], ['n', 912, 74, 925, 90],
  ['n', 965, 90, 970, 108], ['o', 930, 120, 970, 110, 995, 120], ['b', 995, 120, 1015, 132, 1018, 160], ['h', 1015, 132, 1043, 112], ['h', 965, 90, 985, 60],
  ['g', 820, 68, 855, 80, 850, 105], ['g', 820, 68, 815, 110, 845, 155, 875, 155], ['g', 845, 155, 842, 193, 870, 185, 890, 160], ['n', 850, 130, 870, 140],
  ['r', 865, 138, 890, 142], ['r', 840, 210, 862, 208], ['w', 850, 205, 880, 215, 895, 235, 870, 255, 850, 235], ['b', 815, 238, 850, 235], ['k', 870, 250, 905, 270, 910, 240],
  ['w', 855, 215, 855, 270, 840, 290, 790, 310, 750, 350, 720, 345], ['k', 790, 275, 830, 275, 870, 290, 900, 310], ['g', 720, 310, 760, 300, 790, 310, 840, 280, 870, 275, 900, 310],
  ['r', 740, 350, 780, 332], ['w', 710, 320, 740, 345, 780, 320, 860, 290, 900, 325, 930, 340], ['w', 780, 335, 850, 303, 900, 330], ['g', 715, 325, 740, 345, 770, 335, 785, 310],
  ['b', 715, 340, 745, 335, 780, 310], ['g', 730, 325, 770, 318], ['g', 770, 330, 788, 360], ['y', 860, 290, 895, 310, 925, 340, 945, 360], ['w', 850, 270, 890, 300, 905, 350, 945, 370],
  ['n', 905, 290, 912, 310], ['o', 902, 350, 925, 345], ['n', 935, 340, 955, 390], ['b', 945, 345, 965, 395, 990, 380], ['y', 950, 350, 990, 355, 1000, 400, 970, 440],
  ['g', 985, 360, 995, 400, 960, 410, 965, 440, 1000, 460], ['k', 950, 400, 975, 420, 1000, 415], ['y', 930, 430, 970, 430, 990, 405], ['g', 920, 470, 945, 440, 985, 440, 1000, 420],
  ['b', 950, 460, 980, 440, 1010, 430, 1020, 460], ['y', 930, 460, 960, 480, 990, 460], ['g', 910, 475, 950, 480, 975, 470], ['n', 1000, 450, 1040, 435], ['n', 1010, 460, 1040, 450],
  ['r', 1045, 435, 1060, 440, 1055, 455], ['r', 1045, 450, 1062, 432]
];
const loose = {
  h: [802, 40, 856, 55, 885, 30, 923, 38, 858, 38, 795, 88, 735, 162, 765, 125, 780, 130, 785, 145, 937, 60, 985, 60, 1043, 112, 1018, 170, 860, 90, 780, 110, 765, 175,
    785, 205, 795, 225, 812, 215, 775, 190, 940, 155, 925, 150, 915, 165, 948, 195, 935, 200, 925, 190, 892, 190, 880, 205, 900, 200, 915, 215, 925, 235, 905, 240, 928, 250,
    900, 225, 915, 260, 932, 282, 912, 275, 820, 238, 830, 260, 845, 245, 800, 240, 723, 282, 755, 285, 740, 295, 705, 350, 700, 370, 710, 378, 750, 382, 848, 317, 688, 298,
    735, 358, 800, 300, 770, 290, 900, 310, 925, 365, 915, 335, 975, 335, 968, 350, 1015, 345, 1010, 360, 1022, 355, 912, 405, 915, 420, 925, 425, 935, 410, 1010, 400, 1015, 415, 1000, 385,
    890, 455, 900, 465, 905, 480, 925, 490, 915, 505, 930, 508, 945, 515, 935, 460, 970, 480, 980, 492, 1000, 485, 1015, 480, 1025, 485, 1035, 470, 1050, 480, 970, 495, 1000, 500, 1055, 425, 945, 470, 985, 465, 1045, 488],
  g: [820, 68, 855, 80, 818, 110, 845, 155, 842, 193, 875, 155, 750, 300, 985, 440, 920, 470],
  y: [770, 162, 800, 212, 875, 115, 920, 155, 850, 175, 990, 355, 930, 430, 1000, 395],
  b: [888, 48, 1015, 132, 798, 155, 925, 180, 925, 345],
  n: [912, 74, 965, 90, 910, 295, 915, 305, 945, 355, 950, 375, 955, 388, 1000, 455, 1012, 445, 1025, 440, 1035, 445, 1010, 460],
  o: [888, 98, 903, 162, 857, 245, 970, 110, 902, 350, 822, 303], l: [958, 128], e: [785, 362, 790, 368], k: [805, 130, 830, 270, 900, 270], w: [720, 345, 870, 290, 900, 310]
};
const order = ['k', 'w', 'h', 'b', 'y', 'g', 'n', 'o', 'l', 'e'];
chains.forEach(([c, ...p]) => {
  for (let i = 0; i + 3 < p.length; i += 2) stick(p[i], p[i + 1], p[i + 2], p[i + 3], c, 11);
});
// hydrogens are bonded towards the middle of the fragment that holds them
const centres = [[850, 145], [870, 240], [760, 325], [965, 420], [990, 115]];
order.forEach(c => {
  const a = loose[c];
  for (let i = 0; i < a.length; i += 2) {
    const x = a[i], y = a[i + 1];
    if (c === 'h') {
      const near = centres.slice().sort((p, q) => Math.hypot(p[0] - x, p[1] - y) - Math.hypot(q[0] - x, q[1] - y))[0];
      const len = Math.hypot(near[0] - x, near[1] - y) || 1;
      stick(x, y, x + (near[0] - x) / len * 22, y + (near[1] - y) / len * 22, 'h', 5);
    }
    ball(x, y, c, c === 'h' ? 8 : 11);
  }
});
add('path', { d: 'M925 73H939M932 66V80M944 69L948 65V81', stroke: '#ee1c1c', 'stroke-width': 4, fill: 'none' });
```
